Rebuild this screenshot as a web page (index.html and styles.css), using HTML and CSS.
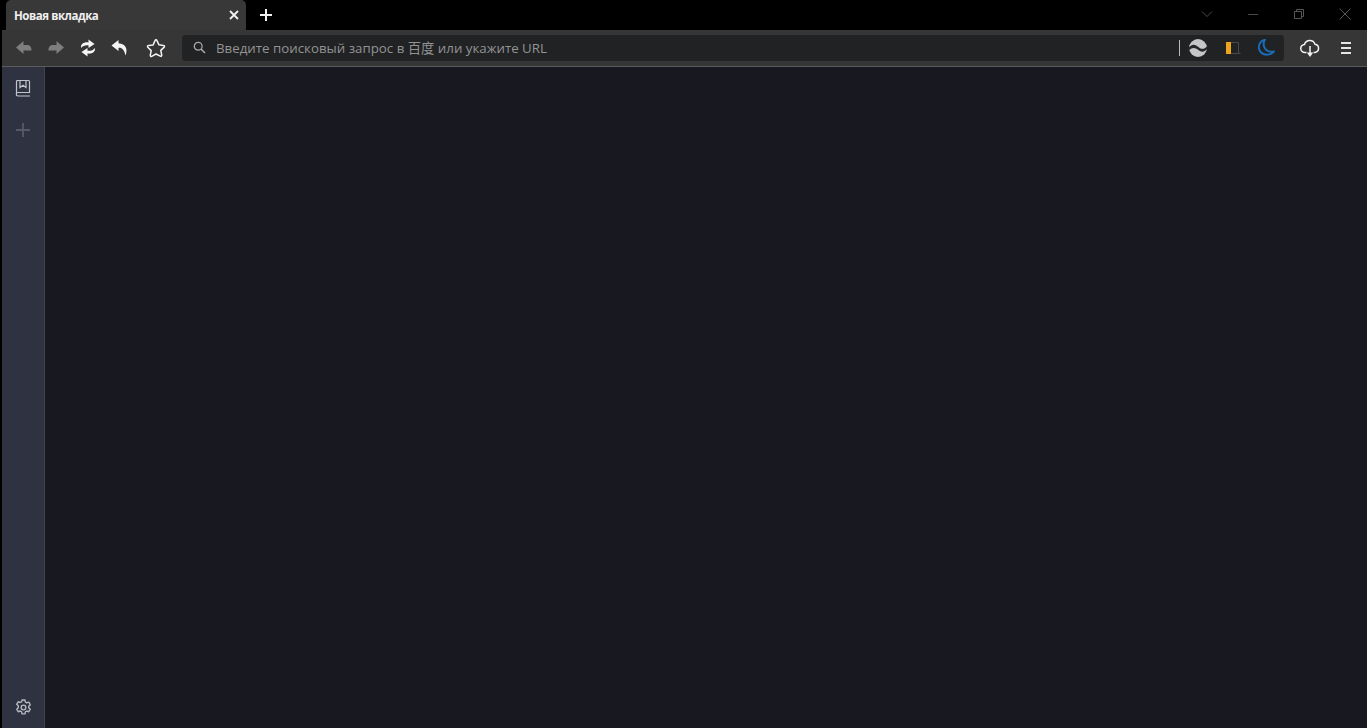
FILE: index.html
```html
<!DOCTYPE html>
<html lang="ru">
<head>
<meta charset="utf-8">
<title>Новая вкладка</title>
<link rel="stylesheet" href="styles.css">
</head>
<body>
<div class="window">
  <header class="titlebar">
    <div class="tab">
      <span class="tab-title">Новая вкладка</span>
      <svg class="tab-close" width="10" height="10" viewBox="0 0 10 10"><path d="M1 1l8 8M9 1l-8 8" stroke="#f2f2f2" stroke-width="1.800" fill="none"/></svg>
    </div>
    <svg class="new-tab" width="14" height="14" viewBox="0 0 14 14"><path d="M7 1v12M1 7h12" stroke="#f0f0f0" stroke-width="2" fill="none"/></svg>
    <div class="window-controls">
      <svg class="wc" width="12" height="12" viewBox="0 0 12 12"><path d="M1 3.500l5 5 5-5" stroke="#4a4a4a" fill="none"/></svg>
      <svg class="wc" width="12" height="12" viewBox="0 0 12 12"><path d="M1 6.500h10" stroke="#4a4a4a" fill="none"/></svg>
      <svg class="wc" width="12" height="12" viewBox="0 0 12 12"><path d="M1.500 3.500h7v7h-7zM3.500 3.500v-2h7v7h-2" stroke="#555" fill="none"/></svg>
      <svg class="wc" width="12" height="12" viewBox="0 0 12 12"><path d="M.5.500l11 11M11.500.500l-11 11" stroke="#555" fill="none"/></svg>
    </div>
  </header>
  <nav class="toolbar">
    <div class="nav-buttons">
      <svg class="tb-icon" width="18" height="16" viewBox="0 0 18 16"><path d="M8.500 1L1 7.500 8.500 14v-3.500h8c.3-3-1.500-5.500-4-5.500h-4z" fill="#7e7e7e"/></svg>
      <svg class="tb-icon" width="18" height="16" viewBox="0 0 18 16"><path d="M9.500 1L17 7.500 9.500 14v-3.500h-8c-.3-3 1.500-5.500 4-5.500h4z" fill="#7e7e7e"/></svg>
      <svg class="tb-icon" width="18" height="20" viewBox="0 0 18 20"><path d="M2 10c-.5-4 3-6.200 7.500-5.600V1.500L15.500 6l-6 4V7.300C6.500 6.800 4 7.500 2 10z" fill="#f6f6f6"/><path d="M16 10c.5 4-3 6.200-7.500 5.600v2.900L2.500 14l6-4v2.700c3 .5 5.500-.2 7.500-2.700z" fill="#f6f6f6"/></svg>
      <svg class="tb-icon" width="18" height="18" viewBox="0 0 18 18"><path d="M7.500 1L.5 6.500l7 5.500V8.800c3.500-.3 5.500 1.500 7 7.700 2.500-6.500.5-11.800-7-12.300z" fill="#f6f6f6"/></svg>
      <svg class="tb-icon star" width="20" height="20" viewBox="0 0 20 20"><path d="M10 1.800c.5 0 .8.300 1 .8l1.900 4.200 4.600.6c1 .1 1.300 1 .7 1.700l-3.400 3.300.9 4.600c.2 1-.6 1.500-1.400 1.100L10 16l-4.300 2.300c-.8.400-1.600-.1-1.400-1.100l.9-4.600-3.400-3.300c-.6-.7-.3-1.600.7-1.700l4.600-.6L9 2.600c.2-.5.5-.8 1-.8z" fill="none" stroke="#f4f4f4" stroke-width="1.500" stroke-linejoin="round"/></svg>
    </div>
    <div class="address-bar">
      <svg class="search-icon" width="13" height="13" viewBox="0 0 13 13"><circle cx="5.200" cy="5.200" r="3.900" fill="none" stroke="#a8a8a8" stroke-width="1.300"/><path d="M8 8l4 4" stroke="#a8a8a8" stroke-width="1.600"/></svg>
      <span class="address-text">Введите поисковый запрос в 百度 или укажите URL</span>
      <span class="separator"></span>
      <svg class="ab-icon ab-globe" width="20" height="20" viewBox="0 0 20 20"><circle cx="10" cy="10" r="9" fill="#c6c6c6"/><path d="M0 10.500C3.500 5.500 7 6 10 8.800s6.500 3.200 10-1.800v3c-3.500 4.500-7 4.500-10 1.800S3.500 9 0 13.500z" fill="#26282a"/></svg>
      <svg class="ab-icon" width="16" height="14" viewBox="0 0 16 14"><rect x="1" y="1" width="5" height="12" fill="#eda51d"/><path d="M6 1.500h7.500v11H6M13.500 9.500v3h2" fill="none" stroke="#4a4a4a"/></svg>
      <svg class="ab-icon" width="17" height="17" viewBox="0 0 17 17"><path d="M7 .8C1.500 1.500-1 8.500 2.500 13c3.500 3.800 10.500 3.500 13.500-.5-4.500.7-8-.5-9.500-3.800C5.300 6 5.500 3 7 .8z" fill="none" stroke="#1b6cb8" stroke-width="1.900" stroke-linejoin="round"/></svg>
    </div>
    <div class="right-buttons">
      <svg class="tb-icon" width="20" height="20" viewBox="0 0 20 20"><path d="M6.500 14.500H5A4 4 0 0 1 4.500 6.500 5.500 5.500 0 0 1 15 6.200a4.200 4.200 0 0 1 0 8.300h-1.500" fill="none" stroke="#f4f4f4" stroke-width="1.500"/><path d="M10 8v8" stroke="#f4f4f4" stroke-width="1.500"/><path d="M6.800 14.500h6.400L10 19z" fill="#f4f4f4"/></svg>
      <svg class="tb-icon" width="10" height="12" viewBox="0 0 10 12"><path d="M0 1h10M0 6h10M0 11h10" stroke="#e6e6e6" stroke-width="1.800"/></svg>
    </div>
  </nav>
  <div class="main">
    <aside class="sidebar">
      <div class="side-top">
        <svg width="16" height="18" viewBox="0 0 16 18"><path d="M1.500 14V2.500a1 1 0 0 1 1-1h11a1 1 0 0 1 1 1V13.500H3a1.700 1.700 0 0 0 0 3.500h12" fill="none" stroke="#c2c4cc" stroke-width="1.200"/><path d="M5 2v6.500l3-2.200 3 2.200V2" fill="none" stroke="#c2c4cc" stroke-width="1.200"/></svg>
        <svg width="14" height="14" viewBox="0 0 14 14"><path d="M7 0v14M0 7h14" stroke="#565a67" stroke-width="1.800"/></svg>
      </div>
      <svg width="17" height="17" viewBox="0 0 16 16"><path d="M6.600 1h2.800l.4 2 1.300.7 1.900-.7 1.400 2.400-1.500 1.400v1.400l1.500 1.400-1.400 2.400-1.900-.7-1.300.7-.4 2H6.600l-.4-2-1.300-.7-1.900.7-1.400-2.400 1.500-1.400V6.400L1.600 5l1.400-2.400 1.900.7 1.300-.7z" fill="none" stroke="#b6b8c1" stroke-width="1.300" stroke-linejoin="round"/><circle cx="8" cy="8" r="2.200" fill="none" stroke="#b6b8c1" stroke-width="1.300"/></svg>
    </aside>
    <main class="content"></main>
  </div>
</div>
</body>
</html>
```
FILE: styles.css
```css
* { box-sizing: border-box; }
html, body { margin: 0; height: 100%; background: #000; overflow: hidden; }
svg { display: block; flex: none; }
.window {
  height: 728px;
  display: flex;
  flex-direction: column;
  font-family: "Open Sans", "Noto Sans CJK SC", sans-serif;
}
.titlebar {
  height: 30px;
  display: flex;
  align-items: center;
  background: #000;
  padding-left: 6px;
}
.tab {
  width: 240px;
  height: 30px;
  background: #383838;
  border-radius: 5px 5px 0 0;
  display: flex;
  align-items: center;
  justify-content: space-between;
  padding: 0 7px 0 8px;
}
.tab-title {
  color: #f0f0f0;
  font-size: 11.500px;
  font-weight: 700;
  letter-spacing: -0.460px;
}
.new-tab { margin-left: 13px; }
.window-controls {
  margin-left: auto;
  display: flex;
  align-items: center;
  gap: 34px;
  padding-right: 16px;
  padding-bottom: 3px;
}
.toolbar {
  height: 37px;
  margin-left: 2px;
  background: #363636;
  border-bottom: 1px solid #5a5c5c;
  display: flex;
  align-items: center;
  padding: 0 13px 1px 13px;
}
.nav-buttons {
  display: flex;
  align-items: center;
  gap: 14px;
  width: 167px;
}
.star { margin-left: 3px; }
.address-bar {
  width: 1102px;
  height: 26px;
  background: #202224;
  border-radius: 4px;
  display: flex;
  align-items: center;
  padding: 0 9px 0 11px;
}
.search-icon { margin-right: 10px; }
.address-text {
  color: #939393;
  font-size: 13.300px;
  flex: 1;
  white-space: nowrap;
}
.separator { width: 1px; height: 16px; background: #bbb; margin-right: 9px; }
.ab-icon { margin-right: 17px; }
.ab-globe { margin-right: 17px; margin-left: -1px; }
.ab-icon:last-child { margin-right: 0; }
.right-buttons {
  display: flex;
  align-items: center;
  gap: 21px;
  margin-left: 16px;
}
.main { flex: 1; display: flex; margin-left: 2px; min-height: 0; }
.sidebar {
  width: 43px;
  background: #2f3240;
  border-right: 1px solid #3f4350;
  display: flex;
  flex-direction: column;
  align-items: center;
  justify-content: space-between;
  padding: 12px 0 12px;
}
.side-top { display: flex; flex-direction: column; align-items: center; gap: 26px; }
.content { flex: 1; background: #181920; }
```
